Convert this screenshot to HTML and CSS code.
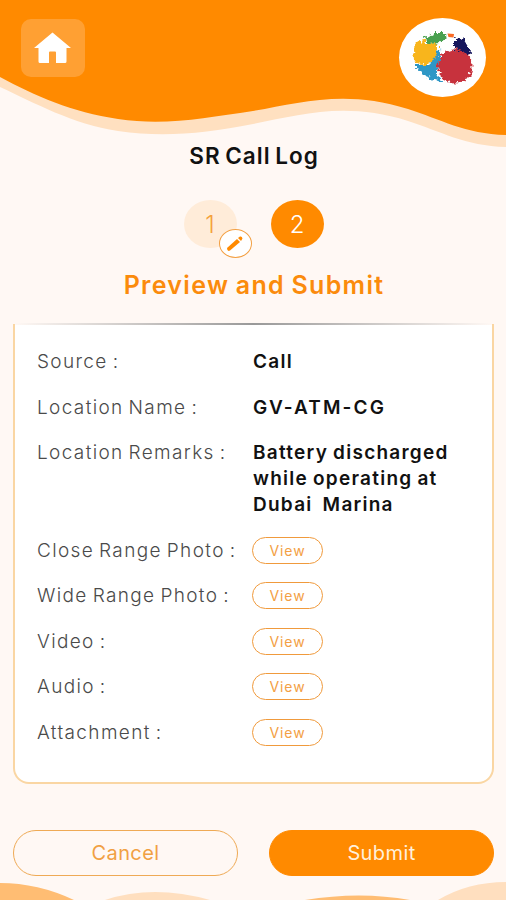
FILE: index.html
```
<!DOCTYPE html>
<html lang="en">
<head>
  <meta charset="UTF-8">
  <meta name="viewport" content="width=device-width, initial-scale=1.0">
  <title>SR Call Log</title>
  <link rel="stylesheet" href="styles.css">
</head>
<body>
  <header class="header">
    <svg class="wave-top" viewBox="0 0 506 150" preserveAspectRatio="none">
      <path fill="#ffe0c0" d="M0 0H506V147C465 146 440 131 408 121C345 101 300 115 253 124C205 133 165 138 118 131C72 124 35 103 0 87Z"/>
      <path fill="#ff8a00" d="M0 0H506V135C465 134 440 119 408 109C345 89 300 103 253 111C205 118 165 126 118 119C72 112 35 96 0 77Z"/>
    </svg>
    <a class="home" href="#">
      <svg width="38" height="32" viewBox="0 0 38 32">
        <path fill="#fff" d="M18.5 0.5L37 16H32.5V29.5Q32.5 31 31 31H22V20.5Q22 19.5 21 19.5H16Q15 19.5 15 20.5V31H6Q4.500 31 4.500 29.500V16H0Z"/>
      </svg>
    </a>
    <div class="logo">
      <svg width="87" height="80" viewBox="0 0 87 80">
        <defs>
          <filter id="splash" x="-30%" y="-30%" width="160%" height="160%">
            <feTurbulence type="fractalNoise" baseFrequency="0.25" numOctaves="2" seed="4"/>
            <feDisplacementMap in="SourceGraphic" scale="9" xChannelSelector="R" yChannelSelector="G"/>
            <feGaussianBlur stdDeviation="0.4"/>
          </filter>
        </defs>
        <g filter="url(#splash)">
          <path fill="#2e97c6" d="M16 47L29 47L34 42L35 32L42 33L39 46L38 55L45 65L36 62L23 57Z"/>
          <path fill="#f8b51e" d="M20 22L29 25L38 24L38 36L33 44L24 47L15 43L14 31Z"/>
          <path fill="#4aa050" d="M26 20L35 15L46 15L48 19L42 24L29 25Z"/>
          <path fill="#16165c" d="M55 19L65 22L72 34L71 38L55 31Z"/>
          <ellipse fill="#c7323e" cx="56" cy="48" rx="17.500" ry="16.500"/>
        </g>
        <path fill="#fa6a24" d="M48.500 15.500L55 16L54.500 19.500L49.500 19Z"/>
      </svg>
    </div>
  </header>

  <main class="content">
    <h1 class="title">SR Call Log</h1>

    <div class="steps">
      <div class="step">1
        <span class="edit">
          <svg width="18" height="17" viewBox="0 0 18 17">
            <path fill="#ff8a00" d="M1 13L11 4L14 7L4 15.500Q1 17 1 13Z"/>
            <path fill="#ff8a00" d="M12 3L14 1.500Q16 1 16.500 3.500L15 6Z"/>
          </svg>
        </span>
      </div>
      <div class="step active">2</div>
    </div>

    <h2 class="subtitle">Preview and Submit</h2>

    <section class="card">
      <div class="row"><span class="label">Source :</span><span class="value">Call</span></div>
      <div class="row"><span class="label">Location Name :</span><span class="value code">GV-ATM-CG</span></div>
      <div class="row"><span class="label">Location Remarks :</span><span class="value">Battery discharged<br>while operating at<br>Dubai&nbsp; Marina</span></div>
      <div class="row"><span class="label">Close Range Photo :</span><button class="view">View</button></div>
      <div class="row"><span class="label">Wide Range Photo :</span><button class="view">View</button></div>
      <div class="row"><span class="label">Video :</span><button class="view">View</button></div>
      <div class="row"><span class="label">Audio :</span><button class="view">View</button></div>
      <div class="row"><span class="label">Attachment :</span><button class="view">View</button></div>
    </section>

    <div class="actions">
      <button class="btn">Cancel</button>
      <button class="btn submit">Submit</button>
    </div>
  </main>

  <svg class="wave-bottom" viewBox="0 0 506 18">
    <path fill="#ffdfbf" d="M105 18Q153 2 210 18ZM438 18Q468 0 506 0V18Z"/>
    <path fill="#ffbd73" d="M0 1Q38 1 74 18H0ZM305 18Q360 9 410 18Z"/>
  </svg>
</body>
</html>
```
FILE: styles.css
```
* {
  box-sizing: border-box;
}
body {
  position: relative;
  margin: 0;
  height: 900px;
  overflow: hidden;
  background-color: #fff8f4;
  font-family: Inter, "Open Sans", sans-serif;
  color: #111;
}
button {
  font-family: inherit;
  background: none;
  cursor: pointer;
}

/* header */
.header {
  position: relative;
  display: flex;
  justify-content: space-between;
  align-items: flex-start;
  height: 141px;
  padding: 18px 20px 0 21px;
}
.wave-top {
  position: absolute;
  top: 0;
  left: 0;
  width: 100%;
  height: 150px;
  z-index: -1;
}
.home {
  display: flex;
  align-items: center;
  justify-content: center;
  width: 64px;
  height: 58px;
  margin-top: 1px;
  border-radius: 10px;
  background-color: #ffa033;
}
.logo {
  width: 87px;
  height: 79px;
  border-radius: 50%;
  background-color: #fff;
}

/* title and steps */
.title {
  margin: 0;
  height: 30px;
  padding-left: 2px;
  line-height: 30px;
  text-align: center;
  font-size: 22.5px;
  font-weight: 600;
  letter-spacing: 1px;
  word-spacing: -2px;
}
.steps {
  display: flex;
  justify-content: center;
  gap: 34px;
  margin-top: 29px;
  padding-left: 1px;
}
.step {
  position: relative;
  width: 53px;
  height: 48px;
  border-radius: 50%;
  background-color: #ffecd9;
  color: #f5a13c;
  font-size: 24px;
  font-weight: 300;
  line-height: 49px;
  text-align: center;
}
.step.active {
  background-color: #ff8a00;
  color: #fff;
}
.edit {
  position: absolute;
  left: 35px;
  top: 29px;
  display: flex;
  align-items: center;
  justify-content: center;
  width: 33px;
  height: 29px;
  border: 1.5px solid #f3a044;
  border-radius: 50%;
  background-color: #fff;
}
.subtitle {
  margin: 21px 0 0;
  height: 34px;
  padding-left: 2px;
  line-height: 33px;
  text-align: center;
  font-size: 25px;
  font-weight: 600;
  letter-spacing: 1.3px;
  word-spacing: -1px;
  color: #fb8b0c;
}

/* details card */
.card {
  position: relative;
  display: flex;
  flex-direction: column;
  gap: 19.5px;
  height: 460px;
  margin: 21px 12px 0 13px;
  padding: 25px 22px 0;
  border: 2px solid #fad6a3;
  border-top: none;
  border-radius: 0 0 16px 16px;
  background-color: #fff;
}
.card::before {
  content: "";
  position: absolute;
  top: -1px;
  left: 0;
  right: 0;
  height: 2px;
  background: linear-gradient(to right, #fff8f4, #999, #fff8f4);
}
.row {
  display: flex;
  align-items: flex-start;
  line-height: 26px;
  font-size: 19px;
}
.label {
  width: 216px;
  flex-shrink: 0;
  font-weight: 300;
  letter-spacing: 1.35px;
  word-spacing: -1.7px;
  white-space: nowrap;
  color: #4a4a4a;
}
.value {
  font-weight: 600;
  letter-spacing: 1.25px;
  word-spacing: -1px;
  white-space: nowrap;
}
.value.code {
  letter-spacing: 2.1px;
}
.view {
  width: 71px;
  height: 27px;
  margin: -1px 0 0 -1px;
  padding: 0;
  border: 1px solid #f09a3c;
  border-radius: 14px;
  color: #f3a044;
  font-size: 14px;
  letter-spacing: 0.9px;
}

/* bottom buttons */
.actions {
  display: flex;
  gap: 31px;
  margin: 46px 12px 0 13px;
}
.btn {
  flex: 1;
  height: 46px;
  padding: 0;
  border: 1.5px solid #efaa55;
  border-radius: 23px;
  color: #f1a043;
  font-size: 20px;
  letter-spacing: 0.4px;
}
.btn.submit {
  border-color: #ff8a00;
  background-color: #ff8a00;
  color: #fff0dc;
}
.wave-bottom {
  position: absolute;
  left: 0;
  bottom: 0;
  width: 506px;
  height: 18px;
}
```
